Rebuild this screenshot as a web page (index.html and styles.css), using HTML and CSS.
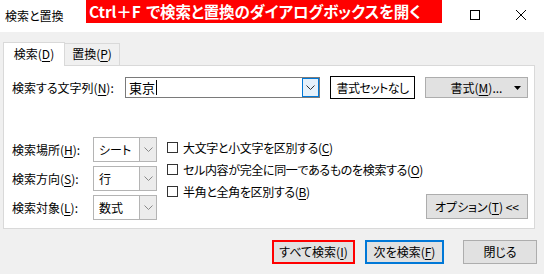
FILE: index.html
```html
<!DOCTYPE html>
<html lang="ja">
<head>
  <meta charset="UTF-8">
  <title>検索と置換</title>
  <link rel="stylesheet" href="styles.css">
</head>
<body>
  <div class="window">
    <div class="titlebar">
      <span class="title">検索と置換</span>
      <div class="caption">Ctrl＋F で検索と置換のダイアログボックスを開く</div>
      <div class="winbtns">
        <span class="winbtn">
          <svg width="10" height="10" viewBox="0 0 10 10"><rect x="0.5" y="0.5" width="9" height="9" fill="none" stroke="#000"/></svg>
        </span>
        <span class="winbtn">
          <svg width="10" height="10" viewBox="0 0 10 10"><path d="M0 0L10 10M10 0L0 10" stroke="#000" stroke-width="1"/></svg>
        </span>
      </div>
    </div>

    <div class="dialog">
      <div class="tabs">
        <div class="tab active">検索(<u>D</u>)</div>
        <div class="tab">置換(<u>P</u>)</div>
      </div>

      <div class="panel">
        <div class="find-row">
          <span class="find-label">検索する文字列(<u>N</u>):</span>
          <div class="find-input">
            <span class="value">東京</span><span class="caret"></span>
            <span class="drop focus">
              <svg width="9" height="5" viewBox="0 0 9 5"><path d="M0.5 0.5L4.5 4.5L8.5 0.5" fill="none" stroke="#333"/></svg>
            </span>
          </div>
          <div class="fmt-preview">書式セットなし</div>
          <button class="btn fmt-btn">
            <span>書式(<u>M</u>)...</span>
            <svg class="arrow" width="7" height="4" viewBox="0 0 7 4"><path d="M0 0H7L3.5 4Z" fill="#000"/></svg>
          </button>
        </div>

        <div class="options">
          <div class="scope">
            <span class="scope-label">検索場所(<u>H</u>):</span>
            <div class="combo"><span class="value">シート</span><span class="drop"><svg width="9" height="5" viewBox="0 0 9 5"><path d="M0.5 0.5L4.5 4.5L8.5 0.5" fill="none" stroke="#888"/></svg></span></div>
            <span class="scope-label">検索方向(<u>S</u>):</span>
            <div class="combo"><span class="value">行</span><span class="drop"><svg width="9" height="5" viewBox="0 0 9 5"><path d="M0.5 0.5L4.5 4.5L8.5 0.5" fill="none" stroke="#888"/></svg></span></div>
            <span class="scope-label">検索対象(<u>L</u>):</span>
            <div class="combo"><span class="value">数式</span><span class="drop"><svg width="9" height="5" viewBox="0 0 9 5"><path d="M0.5 0.5L4.5 4.5L8.5 0.5" fill="none" stroke="#888"/></svg></span></div>
          </div>

          <div class="checks">
            <label class="check"><span class="box"></span>大文字と小文字を区別する(<u>C</u>)</label>
            <label class="check"><span class="box"></span>セル内容が完全に同一であるものを検索する(<u>O</u>)</label>
            <label class="check"><span class="box"></span>半角と全角を区別する(<u>B</u>)</label>
          </div>

          <button class="btn opt-btn">オプション(<u>T</u>) &lt;&lt;</button>
        </div>
      </div>

      <div class="actions">
        <button class="btn find-all">すべて検索(<u>I</u>)</button>
        <button class="btn find-next">次を検索(<u>F</u>)</button>
        <button class="btn close-btn">閉じる</button>
      </div>
    </div>
  </div>
</body>
</html>
```

FILE: styles.css
```css
* { box-sizing: border-box; }
body {
  margin: 0;
  background: #f0f0f0;
  font-family: "Noto Sans CJK JP", "Liberation Sans", sans-serif;
  font-size: 12px;
  color: #000;
  font-feature-settings: "palt";
}
u {
  text-decoration: underline;
  text-underline-offset: 2px;
}
.window {
  width: 544px;
  height: 274px;
  overflow: hidden;
}
.titlebar {
  position: relative;
  height: 32px;
  background: #fff;
  display: flex;
  align-items: center;
}
.title {
  padding-left: 5px;
  padding-bottom: 2px;
}
.caption {
  position: absolute;
  left: 86px;
  top: 0;
  width: 356px;
  height: 23px;
  background: #ff0000;
  color: #fff;
  font-weight: bold;
  font-size: 15.5px;
  line-height: 23px;
  padding-left: 3px;
  white-space: nowrap;
  overflow: hidden;
  letter-spacing: -0.1px;
  word-spacing: 2px;
}
.winbtns {
  margin-left: auto;
  display: flex;
}
.winbtn {
  width: 46px;
  height: 32px;
  display: flex;
  align-items: center;
  justify-content: center;
  padding-bottom: 2px;
}

.dialog {
  padding: 10px 0 0 3px;
}
.tabs {
  display: flex;
  align-items: flex-end;
  height: 23px;
}
.tab {
  height: 22px;
  width: 55px;
  line-height: 20px;
  text-align: center;
  border: 1px solid #d9d9d9;
  border-left: none;
  border-bottom: none;
}
.tab.active {
  position: relative;
  z-index: 1;
  height: 24px;
  width: 62px;
  margin-bottom: -1px;
  border-left: 1px solid #d9d9d9;
  background: #fff;
  line-height: 22px;
}
.panel {
  width: 532px;
  height: 164px;
  background: #fff;
  border: 1px solid #d9d9d9;
  padding: 10px 6px 0 8px;
}

.find-row {
  display: flex;
  align-items: center;
  height: 23px;
}
.find-label {
  width: 113px;
}
.find-input {
  width: 195px;
  height: 21px;
  border: 1px solid #7a7a7a;
  display: flex;
  align-items: center;
  padding-left: 3px;
}
.find-input .value {
  font-size: 13px;
}
.caret {
  width: 1px;
  height: 15px;
  background: #000;
  margin-left: 1px;
}
.drop {
  margin-left: auto;
  width: 17px;
  height: 100%;
  display: flex;
  align-items: center;
  justify-content: center;
}
.drop.focus {
  background: #e5f1fb;
  border: 1px solid #0078d7;
}
.fmt-preview {
  margin-left: 10px;
  width: 85px;
  height: 23px;
  border: 1px solid #000;
  line-height: 21px;
  text-align: center;
  letter-spacing: -0.6px;
  white-space: nowrap;
}

.btn {
  font: inherit;
  color: #000;
  background: #e1e1e1;
  border: 1px solid #adadad;
  padding: 0;
  height: 24px;
  line-height: 20px;
}
.fmt-btn {
  margin-left: 10px;
  width: 103px;
  height: 21px;
  display: flex;
  align-items: center;
  justify-content: center;
  position: relative;
}
.fmt-btn .arrow {
  position: absolute;
  right: 6px;
  top: 8px;
}

.options {
  display: flex;
  align-items: flex-end;
  margin-top: 38px;
}
.scope {
  display: grid;
  grid-template-columns: 81px 64px;
  grid-auto-rows: 25px;
  row-gap: 4px;
  align-items: center;
  flex-shrink: 0;
}
.combo {
  height: 25px;
  border: 1px solid #b4b4b4;
  display: flex;
  align-items: center;
  padding-left: 5px;
}
.combo .drop {
  background: #ececec;
  border-left: 1px solid #b4b4b4;
}
.checks {
  align-self: flex-start;
  margin-left: 10px;
  margin-top: -1px;
  display: flex;
  flex-direction: column;
  flex-shrink: 0;
  white-space: nowrap;
  letter-spacing: -0.35px;
}
.check {
  display: flex;
  align-items: center;
  height: 22px;
}
.box {
  width: 11px;
  height: 11px;
  border: 1px solid #333;
  margin-right: 5px;
  flex-shrink: 0;
}
.opt-btn {
  margin-left: auto;
  width: 102px;
  height: 25px;
  margin-bottom: 1px;
  flex-shrink: 0;
}

.actions {
  display: flex;
  margin-top: 11px;
  padding-left: 269px;
}
.find-all {
  width: 83px;
  border: 2px solid #ff0000;
}
.find-next {
  margin-left: 10px;
  width: 79px;
  border: 2px solid #0078d7;
}
.close-btn {
  margin-left: 19px;
  width: 74px;
}
```
